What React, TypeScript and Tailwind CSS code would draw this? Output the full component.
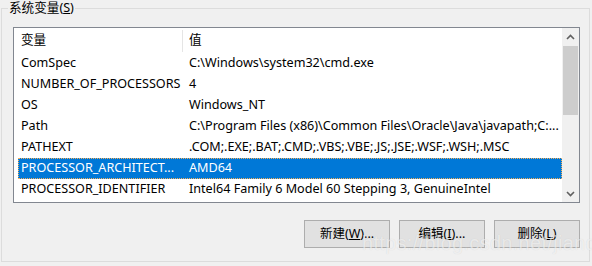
const rows = [
  ['ComSpec', 'C:\\Windows\\system32\\cmd.exe'],
  ['NUMBER_OF_PROCESSORS', '4'],
  ['OS', 'Windows_NT'],
  ['Path', 'C:\\Program Files (x86)\\Common Files\\Oracle\\Java\\javapath;C:...'],
  ['PATHEXT', '.COM;.EXE;.BAT;.CMD;.VBS;.VBE;.JS;.JSE;.WSF;.WSH;.MSC'],
  ['PROCESSOR_ARCHITECT...', 'AMD64'],
  ['PROCESSOR_IDENTIFIER', 'Intel64 Family 6 Model 60 Stepping 3, GenuineIntel'],
]

const font = { fontFamily: '"Noto Sans", "Noto Sans CJK SC", sans-serif' }

function Btn({ label, hot, tail }: { label: string; hot: string; tail: string }) {
  return (
    <button className="flex h-[28px] w-[86px] items-center justify-center border border-[#adadad] bg-[#e1e1e1] text-[12.5px] text-black">
      {label}(<span className="underline">{hot}</span>){tail}
    </button>
  )
}

export default function App() {
  return (
    <div className="relative h-[266px] w-[592px] overflow-hidden bg-[#f0f0f0] pl-[1px] text-[12.6px] text-black" style={font}>
      <fieldset className="m-0 h-[262px] w-[589px] border border-[#dcdcdc] px-0 pb-0 pt-0">
        <legend className="ml-[6px] px-[1px] leading-[16px]">
          系统变量(<span className="underline">S</span>)
        </legend>
        <div className="ml-[11px] mt-[11px] flex h-[176px] w-[567px] border border-[#828790] bg-white">
          <div className="flex-1 overflow-hidden">
            <div className="flex h-[25px] items-center">
              <div className="w-[168px] pl-[7px]">变量</div>
              <div className="h-[22px] w-px bg-[#e5e5e5]" />
              <div className="pl-[6px]">值</div>
            </div>
            {rows.map(([k, v], i) => {
              const sel = i === 5
              return (
                <div
                  key={k}
                  className={
                    sel
                      ? 'ml-[4px] flex h-[21px] items-center border border-dotted border-[#f7b05a] bg-[#0078d7] text-white'
                      : 'ml-[4px] flex h-[21px] items-center border border-transparent'
                  }
                >
                  <div className="w-[170px] whitespace-nowrap pl-[2px]">{k}</div>
                  <div className="whitespace-nowrap">{v}</div>
                </div>
              )
            })}
          </div>
          <div className="flex w-[17px] flex-col items-center bg-[#f0f0f0]">
            <div className="flex h-[17px] w-full items-center justify-center">
              <svg width="9" height="6" viewBox="0 0 9 6">
                <path d="M1 5 L4.5 1.5 L8 5" fill="none" stroke="#606060" strokeWidth="1.6" />
              </svg>
            </div>
            <div className="mt-[1px] h-[69px] w-[15px] bg-[#cdcdcd]" />
            <div className="flex-1" />
            <div className="flex h-[17px] w-full items-center justify-center">
              <svg width="9" height="6" viewBox="0 0 9 6">
                <path d="M1 1 L4.5 4.5 L8 1" fill="none" stroke="#606060" strokeWidth="1.6" />
              </svg>
            </div>
          </div>
        </div>
        <div className="mt-[17px] flex justify-end gap-[9px] pr-[9px]">
          <Btn label="新建" hot="W" tail="..." />
          <Btn label="编辑" hot="I" tail="..." />
          <Btn label="删除" hot="L" tail="" />
        </div>
      </fieldset>
      <div className="pointer-events-none absolute left-[362px] top-[228px] text-[20px] tracking-[0.3px] text-white/60" style={{ fontFamily: '"Liberation Sans", sans-serif', textShadow: '0 0 1px rgba(0,0,0,0.12)' }}>
        https://blog.csdn.net/jiandanyou
      </div>
    </div>
  )
}
